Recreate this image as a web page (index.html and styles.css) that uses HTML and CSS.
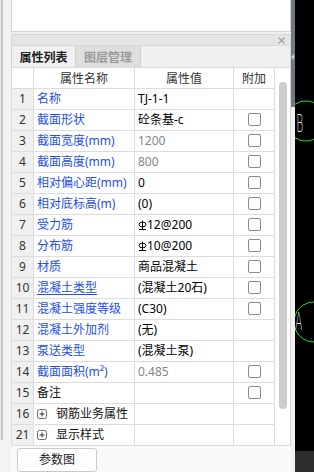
FILE: index.html
```html
<!DOCTYPE html>
<html lang="zh">
<head>
<meta charset="utf-8">
<link rel="stylesheet" href="styles.css">
</head>
<body>
<div class="app">
  <div class="edge"></div>
  <div class="gutter"></div>
  <div class="panel">
    <div class="topbox"></div>
    <div class="gap"></div>
    <div class="titlebar"><svg class="close" width="7" height="7" viewBox="0 0 7 7"><path d="M0.5 0.5L6.5 6.5M6.5 0.5L0.5 6.5" stroke="#a0a0a0" stroke-width="1.1"/></svg></div>
    <div class="tabs">
      <div class="tab active">属性列表</div>
      <div class="tab inactive">图层管理</div>
    </div>
    <div class="table">
      <div class="grid">
        <div class="c hnum"></div><div class="c head">属性名称</div><div class="c head">属性值</div><div class="c head">附加</div>

        <div class="c num">1</div><div class="c name">名称</div><div class="c val">TJ-1-1</div><div class="c add"></div>
        <div class="c num">2</div><div class="c name">截面形状</div><div class="c val">砼条基-c</div><div class="c add"><span class="cb"></span></div>
        <div class="c num">3</div><div class="c name">截面宽度(mm)</div><div class="c val gray">1200</div><div class="c add"><span class="cb"></span></div>
        <div class="c num">4</div><div class="c name">截面高度(mm)</div><div class="c val gray">800</div><div class="c add"><span class="cb"></span></div>
        <div class="c num">5</div><div class="c name">相对偏心距(mm)</div><div class="c val">0</div><div class="c add"><span class="cb"></span></div>
        <div class="c num">6</div><div class="c name">相对底标高(m)</div><div class="c val">(0)</div><div class="c add"><span class="cb"></span></div>
        <div class="c num">7</div><div class="c name">受力筋</div><div class="c val"><svg class="rebar" width="9" height="12" viewBox="0 0 9 12"><ellipse cx="4.5" cy="5.5" rx="3.4" ry="2.4" fill="none" stroke="#000" stroke-width="1"/><path d="M4.5 1.5V10M1 10.5H8" stroke="#000" stroke-width="1" fill="none"/></svg>12@200</div><div class="c add"><span class="cb"></span></div>
        <div class="c num">8</div><div class="c name">分布筋</div><div class="c val"><svg class="rebar" width="9" height="12" viewBox="0 0 9 12"><ellipse cx="4.5" cy="5.5" rx="3.4" ry="2.4" fill="none" stroke="#000" stroke-width="1"/><path d="M4.5 1.5V10M1 10.5H8" stroke="#000" stroke-width="1" fill="none"/></svg>10@200</div><div class="c add"><span class="cb"></span></div>
        <div class="c num">9</div><div class="c name">材质</div><div class="c val">商品混凝土</div><div class="c add"><span class="cb"></span></div>
        <div class="c num">10</div><div class="c name"><span class="ul">混凝土类型</span></div><div class="c val">(混凝土20石)</div><div class="c add"><span class="cb"></span></div>
        <div class="c num">11</div><div class="c name">混凝土强度等级</div><div class="c val">(C30)</div><div class="c add"><span class="cb"></span></div>
        <div class="c num">12</div><div class="c name">混凝土外加剂</div><div class="c val">(无)</div><div class="c add"></div>
        <div class="c num">13</div><div class="c name">泵送类型</div><div class="c val">(混凝土泵)</div><div class="c add"></div>
        <div class="c num">14</div><div class="c name">截面面积(m²)</div><div class="c val gray">0.485</div><div class="c add"><span class="cb"></span></div>
        <div class="c num">15</div><div class="c name black">备注</div><div class="c val"></div><div class="c add"><span class="cb"></span></div>
        <div class="c num">16</div><div class="c name black"><svg class="plus" width="10" height="10" viewBox="0 0 10 10"><rect x="0.5" y="0.5" width="9" height="9" rx="2" fill="#fff" stroke="#666"/><path d="M2.5 5H7.5M5 2.5V7.5" stroke="#333" stroke-width="1"/></svg>钢筋业务属性</div><div class="c val"></div><div class="c add"></div>
        <div class="c num">21</div><div class="c name black"><svg class="plus" width="10" height="10" viewBox="0 0 10 10"><rect x="0.5" y="0.5" width="9" height="9" rx="2" fill="#fff" stroke="#666"/><path d="M2.5 5H7.5M5 2.5V7.5" stroke="#333" stroke-width="1"/></svg>显示样式</div><div class="c val"></div><div class="c add"></div>
      </div>
      <div class="vscroll"><div class="thumb"></div></div>
    </div>
    <div class="footer"><div class="btn">参数图</div></div>
  </div>
  <div class="divider">
    <div class="divider-top"><svg class="arrow" width="3" height="6" viewBox="0 0 3 6"><path d="M3 0L0 3L3 6Z" fill="#c8ccd0"/></svg></div>
  </div>
  <div class="canvas">
    <svg class="cad" width="19" height="451" viewBox="0 0 19 451">
      <circle cx="11" cy="121" r="20" fill="none" stroke="#1ee01e" stroke-width="1"/>
      <circle cx="19" cy="322" r="20" fill="none" stroke="#1ee01e" stroke-width="1"/>
      <text class="cadtext" x="3" y="132" transform="scale(0.45 1)" transform-origin="0 0">B</text>
      <text class="cadtext" x="0" y="330" transform="scale(0.45 1)" transform-origin="0 0">A</text>
    </svg>
    <div class="canvas-bottom"></div>
  </div>
</div>
</body>
</html>
```
FILE: styles.css
```css
* { box-sizing: border-box; }
html, body { margin: 0; padding: 0; }
body {
  width: 314px;
  height: 472px;
  overflow: hidden;
  background: #f4f4f4;
  font-family: "Noto Sans", "Noto Sans CJK SC", sans-serif;
  font-size: 12px;
  color: #000;
}
.app {
  display: flex;
  width: 314px;
  height: 472px;
}
.edge {
  width: 3px;
  height: 440px;
  background: #c8c8c8;
  border-left: 1px solid #e4e4e4;
  flex: none;
}
.gutter {
  width: 8px;
  flex: none;
  background: #f2f2f2;
}
.panel {
  width: 280px;
  flex: none;
  display: flex;
  flex-direction: column;
  background: #f9f9f9;
}
.topbox {
  height: 33px;
  background: #fff;
  border: 1px solid #d4d4d4;
  border-top: none;
}
.gap {
  height: 3px;
  background: #f0f0f0;
}
.titlebar {
  height: 11px;
  background: #e5e5e5;
  border-top: 1px solid #d6d6d6;
  border-left: 1px solid #d4d4d4;
  border-right: 1px solid #d4d4d4;
  display: flex;
  justify-content: flex-end;
  align-items: center;
  padding-right: 5px;
}
.close { display: block; }
.tabs {
  height: 23px;
  display: flex;
  background: #f0f0f0;
  border-top: 1px solid #dadada;
  border-left: 1px solid #cfcfcf;
  border-right: 1px solid #d4d4d4;
}
.tab {
  width: 65px;
  display: flex;
  align-items: center;
  justify-content: center;
  font-family: "Noto Sans CJK SC", sans-serif;
  font-weight: bold;
  font-size: 12px;
  border-right: 1px solid #cfcfcf;
}
.tab.active {
  width: 64px;
  background: #f0f0f0;
  color: #222;
}
.tab.inactive {
  background: #dedede;
  color: #9a9a9a;
}
.table {
  display: flex;
  height: 379px;
}
.grid {
  display: grid;
  grid-template-columns: 21px 100px 98px 40px;
  grid-auto-rows: 20px;
  gap: 1px;
  padding: 1px;
  background: #dcdcdc;
  width: 264px;
}
.c {
  background: #fff;
  line-height: 20px;
  white-space: nowrap;
  overflow: hidden;
}
.hnum { background: #fff; }
.head {
  text-align: center;
  color: #333;
  font-family: "Noto Sans CJK SC", sans-serif;
}
.num {
  background: #f0f0f0;
  text-align: center;
  color: #333;
}
.name {
  padding-left: 3px;
  color: #2450e6;
  display: flex;
  align-items: center;
}
.name.black { color: #111; }
.ul { text-decoration: underline; text-underline-offset: 2px; }
.val {
  padding-left: 3px;
  color: #000;
  display: flex;
  align-items: center;
}
.val.gray { color: #858585; }
.rebar { margin-right: 0; flex: none; }
.add {
  display: flex;
  align-items: center;
  justify-content: center;
}
.cb {
  width: 13px;
  height: 13px;
  border: 1px solid #8a8a8a;
  border-radius: 2px;
  background: #fff;
  margin-left: 1px;
}
.plus {
  flex: none;
  margin-right: 9px;
}
.vscroll {
  width: 16px;
  background: #fff;
  border-top: 1px solid #dcdcdc;
  border-bottom: 1px solid #dcdcdc;
  border-right: 1px solid #d4d4d4;
  padding-top: 14px;
  padding-left: 4px;
}
.thumb {
  width: 8px;
  height: 327px;
  border-radius: 4px;
  background: #cdcdcd;
}
.footer {
  flex: 1;
  padding: 2px 0 0 6px;
  background: #f9f9f9;
}
.btn {
  width: 80px;
  height: 24px;
  border: 1px solid #c8c8c8;
  border-radius: 3px;
  background: #fdfdfd;
  display: flex;
  justify-content: center;
  align-items: center;
  font-family: "Noto Sans CJK SC", sans-serif;
  color: #222;
  padding-bottom: 2px;
}
.divider {
  width: 4px;
  flex: none;
  background: #f0f0f0;
}
.divider-top {
  height: 107px;
  background: #6f7a86;
  padding-top: 54px;
}
.arrow { display: block; }
.canvas {
  width: 19px;
  flex: none;
  display: flex;
  flex-direction: column;
  background: #000;
}
.cad { display: block; flex: none; }
.cadtext {
  font-family: "DejaVu Sans", sans-serif;
  font-weight: 200;
  font-size: 24px;
  fill: #dcdcdc;
}
.canvas-bottom {
  flex: 1;
  background: #2d2d2d;
}
```
